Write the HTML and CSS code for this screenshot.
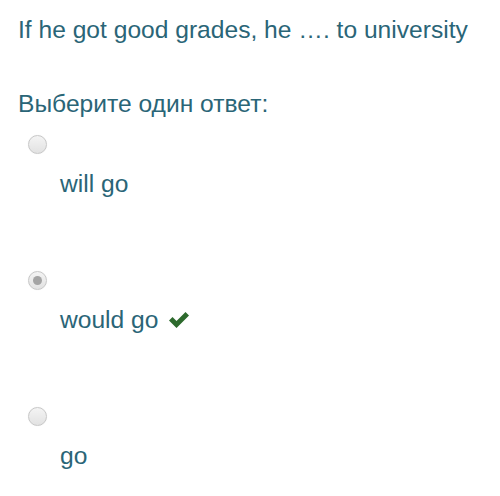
FILE: index.html
```html
<!DOCTYPE html>
<html lang="ru">
<head>
    <meta charset="UTF-8">
    <meta name="viewport" content="width=device-width, initial-scale=1.0">
    <title>Вопрос</title>
    <link rel="stylesheet" href="styles.css">
</head>
<body>
    <div class="question">
        <p class="qtext">If he got good grades, he …. to university</p>

        <div class="ablock">
            <p class="prompt">Выберите один ответ:</p>
            <div class="answer">
                <div class="option">
                    <span class="radio"></span>
                    <label class="option-label">will go</label>
                </div>
                <div class="option">
                    <span class="radio checked"></span>
                    <label class="option-label">would go
                        <svg class="tick" viewBox="0 0 24 20" width="24" height="20">
                            <path d="M2 10.5 L5.5 7 L9.5 11 L18.5 2 L22 5.5 L9.5 18 Z" fill="#2d6a2d"/>
                        </svg>
                    </label>
                </div>
                <div class="option">
                    <span class="radio"></span>
                    <label class="option-label">go</label>
                </div>
            </div>
        </div>
    </div>
</body>
</html>
```

FILE: styles.css
```css
body {
    margin: 0;
    padding: 0;
    background-color: #ffffff;
    font-family: "Liberation Sans", Arial, sans-serif;
    color: #2a6577;
}

.question {
    padding: 15px 18px;
}

.qtext {
    margin: 0;
    font-size: 24.6px;
    line-height: 30px;
}

.ablock {
    margin-top: 44px;
}

.prompt {
    margin: 0;
    font-size: 24.6px;
    line-height: 30px;
}

.answer {
    display: flex;
    flex-direction: column;
    gap: 72px;
    margin-top: 16px;
}

.option {
    display: flex;
    flex-direction: column;
}

.radio {
    width: 17px;
    height: 17px;
    margin-left: 10px;
    border: 1px solid #c8c8c8;
    border-radius: 50%;
    background: linear-gradient(#f4f4f4, #e2e2e2);
    box-shadow: 0 0 1px rgba(0, 0, 0, 0.1);
    position: relative;
}

.radio.checked::after {
    content: "";
    position: absolute;
    left: 4px;
    top: 4px;
    width: 9px;
    height: 9px;
    border-radius: 50%;
    background: #a4a4a4;
}

.option-label {
    margin-top: 15px;
    margin-left: 42px;
    font-size: 24.6px;
    line-height: 30px;
    display: flex;
    align-items: center;
    gap: 9px;
}

.tick {
    display: block;
}
```
